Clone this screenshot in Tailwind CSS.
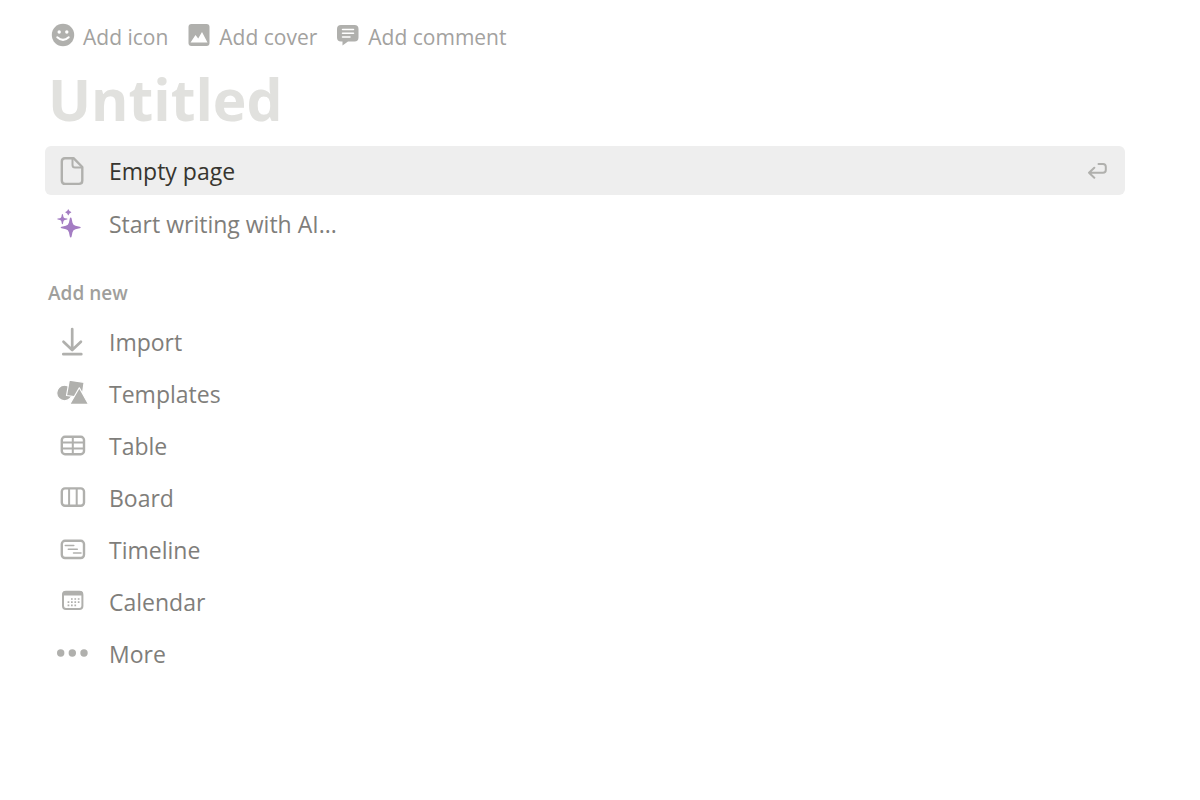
<!DOCTYPE html>
<html lang="en">
<head>
<meta charset="utf-8">
<meta name="viewport" content="width=device-width, initial-scale=1">
<title>Untitled</title>
<script src="https://cdn.jsdelivr.net/npm/@tailwindcss/browser@4"></script>
</head>
<body class="min-h-screen bg-white font-['Segoe_UI','Open_Sans',sans-serif] text-[#7f7e7b]">
<main class="pt-5 pr-[75px] pl-[45px]">
  <div class="flex h-8 items-center gap-[19px] pl-[6px] text-[21px] leading-7 text-[#a3a29f]">
    <button type="button" class="flex items-center gap-2">
      <svg class="size-6 -mt-0.5 text-[#b0b0ad]" viewBox="0 0 24 24" fill="currentColor" aria-hidden="true"><circle cx="12" cy="12" r="11.2"/><g fill="#fff"><circle cx="8.2" cy="9" r="1.7"/><circle cx="15.8" cy="9" r="1.7"/></g><path d="M6.3 14.2q5.7 5.4 11.4 0" fill="none" stroke="#fff" stroke-width="2" stroke-linecap="round"/></svg>
      <span class="pt-0.5">Add icon</span>
    </button>
    <button type="button" class="flex items-center gap-2">
      <svg class="size-6 -mt-0.5 text-[#b0b0ad]" viewBox="0 0 24 24" fill="currentColor" aria-hidden="true"><rect x="1.5" y="1" width="21" height="22" rx="3"/><path d="M3.500 19.500 8.500 12l2.700 3.600L15 9l5.500 10.500z" fill="#fff"/></svg>
      <span class="pt-0.5">Add cover</span>
    </button>
    <button type="button" class="flex items-center gap-2">
      <svg class="size-6 -mt-0.5 text-[#b0b0ad]" viewBox="0 0 24 24" fill="currentColor" aria-hidden="true"><path d="M5 2h13.500q4 0 4 4v8.500q0 4-4 4H12l-5.500 4v-4H5q-4 0-4-4V6q0-4 4-4Z"/><path d="M6.500 6.500h11M6.500 10.200h11M6.500 13.900h7.500" stroke="#fff" stroke-width="1.500" stroke-linecap="round"/></svg>
      <span class="pt-0.5">Add comment</span>
    </button>
  </div>

  <h1 class="mt-2 pl-[3px] text-[57px] leading-[78px] font-bold text-[#e1e1de]">Untitled</h1>

  <ul class="mt-2 flex flex-col gap-1 text-[23px]">
    <li>
      <button type="button" class="flex h-[49px] w-full items-center gap-5 rounded-md bg-[#eeeeee] pr-[18px] pl-3 text-left text-[#37352f]">
        <svg class="size-8 shrink-0 text-[#b0b0ad]" viewBox="0 0 32 32" fill="none" stroke="currentColor" stroke-width="2.400" stroke-linejoin="round" aria-hidden="true"><path d="M8 3.200h8.500L25.300 12v13.500q0 3.400-3.400 3.400H8.200q-3.400 0-3.400-3.400V6.500q0-3.300 3.200-3.300Z"/><path d="M15.500 3.500V10q0 2.500 2.500 2.500h7" stroke-width="2"/></svg>
        <span class="grow pt-0.5">Empty page</span>
        <svg class="h-4 w-5 shrink-0 text-[#b0b0ad]" viewBox="0 0 20 16" fill="none" stroke="currentColor" stroke-width="2" stroke-linecap="round" stroke-linejoin="round" aria-hidden="true"><path d="M11.500 1h4.500q2.800 0 2.800 2.800V7q0 2.800-2.800 2.800H2M7.300 4.800 2 9.800l5.300 5"/></svg>
      </button>
    </li>
    <li>
      <button type="button" class="flex h-12 w-full items-center gap-5 rounded-md pl-3 text-left">
        <svg class="size-8 shrink-0 text-[#a47dc3]" viewBox="0 1 32 32" fill="currentColor" aria-hidden="true"><path d="M13.700 11.500q.7 0 .9 1.100l.9 4.200q.6 2.400 3 3l4.200.9q1 .2 1 .8t-1 .8l-4.200.9q-2.400.6-3 3l-.9 4.200q-.2 1.100-.9 1.100t-.9-1.100l-.9-4.200q-.6-2.400-3-3l-4.200-.9q-1-.2-1-.8t1-.8l4.200-.9q2.400-.6 3-3l.9-4.200q.2-1.100.9-1.100ZM5.400 8q.5 0 .6.700l.4 2q.3 1.200 1.500 1.500l2 .4q.7.1.7.500t-.7.500l-2 .4q-1.200.3-1.500 1.500l-.4 2q-.1.700-.6.700t-.6-.7l-.4-2Q4.100 14.300 2.900 14l-2-.4q-.7-.1-.7-.500t.7-.500l2-.4q1.200-.3 1.500-1.500l.4-2q.1-.7.600-.7ZM11.300 3.300q.4 0 .5.500.3 1.700 2 2 .5.100.5.500t-.5.500q-1.700.3-2 2-.1.500-.5.500t-.5-.5q-.3-1.700-2-2-.5-.1-.5-.5t.5-.5q1.700-.3 2-2 .1-.5.500-.5Z"/></svg>
        <span class="pt-0.5">Start writing with AI...</span>
      </button>
    </li>
  </ul>

  <h2 class="mt-8 pl-[3px] text-[19px] leading-7 font-semibold text-[#a09f9c]">Add new</h2>

  <ul class="mt-[11px] flex flex-col gap-1 text-[23px]">
    <li>
      <button type="button" class="flex h-12 w-full items-center gap-5 rounded-md pl-3 text-left">
        <svg class="size-8 shrink-0 text-[#b0b0ad]" viewBox="0 0 32 32" fill="none" stroke="currentColor" stroke-width="2.700" stroke-linecap="round" stroke-linejoin="round" aria-hidden="true"><path d="M15.200 3v20.500M6.500 15.700l8.700 8.300 8.700-8.300M6.300 28.200h18"/></svg>
        <span>Import</span>
      </button>
    </li>
    <li>
      <button type="button" class="flex h-12 w-full items-center gap-5 rounded-md pl-3 text-left">
        <svg class="size-8 shrink-0 overflow-visible text-[#b0b0ad]" viewBox="0 0 32 32" fill="currentColor" stroke="#fff" stroke-width="1.200" stroke-linejoin="round" aria-hidden="true"><circle cx="7.500" cy="15" r="7.800"/><path d="m12.300 2.200 14.800 2.100-2.200 15.400-15.400-2.200Z"/><path d="m22.300 9.800 9.200 16.500H12.800Z"/></svg>
        <span>Templates</span>
      </button>
    </li>
    <li>
      <button type="button" class="flex h-12 w-full items-center gap-5 rounded-md pl-3 text-left">
        <svg class="size-8 shrink-0 text-[#b0b0ad]" viewBox="0 0 32 32" fill="none" stroke="currentColor" stroke-width="2.400" aria-hidden="true"><rect x="4.800" y="6.800" width="22.200" height="17.400" rx="3.200"/><path d="M15.800 7v17M5 12.400h22M5 18.400h22" stroke-width="2"/></svg>
        <span>Table</span>
      </button>
    </li>
    <li>
      <button type="button" class="flex h-12 w-full items-center gap-5 rounded-md pl-3 text-left">
        <svg class="size-8 shrink-0 text-[#b0b0ad]" viewBox="0 0 32 32" fill="none" stroke="currentColor" stroke-width="2.400" aria-hidden="true"><rect x="4.800" y="6.400" width="22.200" height="17.400" rx="3.200"/><path d="M12.100 6.500v17M19.700 6.500v17" stroke-width="2"/></svg>
        <span>Board</span>
      </button>
    </li>
    <li>
      <button type="button" class="flex h-12 w-full items-center gap-5 rounded-md pl-3 text-left">
        <svg class="size-8 shrink-0 text-[#b0b0ad]" viewBox="0 0 32 32" fill="none" stroke="currentColor" stroke-width="2.400" aria-hidden="true"><rect x="4.800" y="6.800" width="22.200" height="17.200" rx="3.200"/><path d="M8.300 11.500h8.500M11.300 15.200h9M16.500 18.900h7.500" stroke-width="1.500" stroke-linecap="round"/></svg>
        <span>Timeline</span>
      </button>
    </li>
    <li>
      <button type="button" class="flex h-12 w-full items-center gap-5 rounded-md pl-3 text-left">
        <svg class="size-8 shrink-0 text-[#b0b0ad]" viewBox="0 0 32 32" aria-hidden="true"><rect x="6" y="5.800" width="19.400" height="17.200" rx="3" fill="none" stroke="currentColor" stroke-width="2"/><path d="M5.500 9.500V8q0-3 3-3H23q3 0 3 3v1.500Z" fill="currentColor"/><path d="M14 13h10M10.600 16.200h13M10.600 19.400h9" fill="none" stroke="currentColor" stroke-width="1.700" stroke-dasharray="1.700 1.700"/></svg>
        <span>Calendar</span>
      </button>
    </li>
    <li>
      <button type="button" class="flex h-12 w-full items-center gap-5 rounded-md pl-3 text-left">
        <svg class="size-8 shrink-0 text-[#b0b0ad]" viewBox="0 0 32 32" fill="currentColor" aria-hidden="true"><circle cx="3.700" cy="15" r="3.700"/><circle cx="15.300" cy="15" r="3.700"/><circle cx="27" cy="15" r="3.700"/></svg>
        <span>More</span>
      </button>
    </li>
  </ul>
</main>
</body>
</html>
